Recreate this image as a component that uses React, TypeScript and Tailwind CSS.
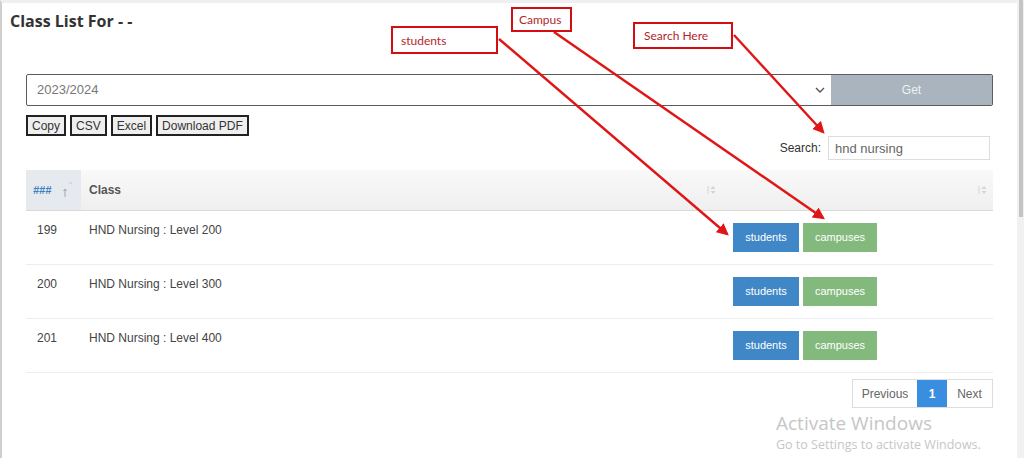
import React from "react";

const rows = [
  { id: "199", name: "HND Nursing : Level 200" },
  { id: "200", name: "HND Nursing : Level 300" },
  { id: "201", name: "HND Nursing : Level 400" },
];

const SortBoth = () => (
  <svg width="9" height="12" viewBox="0 0 9 12" className="text-[#d4d4d4]">
    <path d="M1 2v8" stroke="currentColor" strokeWidth="1" />
    <path d="M3.5 5L6 2l2.5 3z" fill="currentColor" />
    <path d="M3.5 7L6 10l2.5-3z" fill="currentColor" />
  </svg>
);

const Annotations = () => (
  <>
    <div className="absolute left-[391px] top-[26px] w-[107px] h-[28px] border-2 border-[#d40d12] bg-white pl-[8px] pt-[4px] text-[12px] text-[#b3262b] font-['Lato',sans-serif]">
      students
    </div>
    <div className="absolute left-[511px] top-[7px] w-[61px] h-[25px] border-2 border-[#d40d12] bg-white pl-[6px] pt-[2px] text-[12px] text-[#b3262b] font-['Lato',sans-serif]">
      Campus
    </div>
    <div className="absolute left-[633px] top-[22px] w-[100px] h-[27px] border-2 border-[#d40d12] bg-white pl-[9px] pt-[3px] text-[12px] text-[#b3262b] font-['Lato',sans-serif]">
      Search Here
    </div>
    <svg className="absolute left-0 top-0 pointer-events-none" width="1024" height="458">
      <defs>
        <marker id="head" markerWidth="5" markerHeight="5" refX="4" refY="2.5" orient="auto" markerUnits="strokeWidth">
          <path d="M0 0L5 2.5L0 5z" fill="#e01515" />
        </marker>
      </defs>
      <line x1="499" y1="39" x2="727" y2="234" stroke="#e01515" strokeWidth="2.4" markerEnd="url(#head)" />
      <line x1="554" y1="32" x2="823" y2="218" stroke="#e01515" strokeWidth="2.4" markerEnd="url(#head)" />
      <line x1="734" y1="35" x2="823" y2="132" stroke="#e01515" strokeWidth="2.4" markerEnd="url(#head)" />
    </svg>
  </>
);

export default function App() {
  return (
    <div className="relative flex h-[458px] w-[1024px] overflow-hidden bg-white font-['Liberation_Sans',Arial,sans-serif]">
      <div className="flex-1 border-l-2 border-t-[3px] border-l-[#cfcfcf] border-t-[#efefef]">
        <h1 className="pl-[8px] pt-[8px] text-[16px] leading-[20px] font-bold text-[#333] font-['Open_Sans',sans-serif]">
          Class List For - -
        </h1>
        <div className="px-[24px] pt-[43px]">
          <div className="flex h-[32px] rounded-[2px] border border-[#5c5c5c] overflow-hidden">
            <div className="flex flex-1 items-center justify-between pl-[10px] pr-[6px] text-[13px] text-[#777]">
              <span>2023/2024</span>
              <svg width="10" height="6" viewBox="0 0 10 6">
                <path d="M1 1l4 4 4-4" stroke="#555" strokeWidth="1.4" fill="none" />
              </svg>
            </div>
            <div className="flex w-[161px] items-center justify-center bg-[#a9b4be] text-[12px] text-[#eef1f3]">
              Get
            </div>
          </div>

          <div className="mt-[9px] flex h-[21px] gap-[4px]">
            {["Copy", "CSV", "Excel", "Download PDF"].map((b) => (
              <div key={b} className="flex items-center border-2 border-[#222] bg-[#efefef] px-[4px] text-[12px] text-[#333]">
                {b}
              </div>
            ))}
          </div>

          <div className="flex items-center justify-end gap-[7px] pr-[3px]">
            <span className="text-[12px] text-[#333]">Search:</span>
            <div className="flex h-[24px] w-[162px] items-center border border-[#ddd] px-[6px] pt-[2px] text-[13px] text-[#666]">
              hnd nursing
            </div>
          </div>

          <div className="mt-[10px]">
            <div className="flex h-[41px] border-b border-[#d9d9d9] bg-gradient-to-b from-[#f9f9f9] to-[#efefef] text-[12px]">
              <div className="flex w-[55px] items-center justify-between bg-[#e6eaef] pl-[7px] pr-[9px]">
                <span className="font-bold italic text-[11px] text-[#3f7fc4]">###</span>
                <svg width="10" height="20" viewBox="0 0 10 20">
                  <path d="M7 4l1.5-2 1.5 2" stroke="#c8ccd0" strokeWidth="1" fill="none" />
                  <path d="M3 17V9M1.5 11L3 9l1.5 2" stroke="#9aa7b5" strokeWidth="1" fill="none" />
                </svg>
              </div>
              <div className="flex w-[641px] items-center justify-between pl-[8px] pr-[6px] font-bold text-[#555]">
                <span>Class</span>
                <SortBoth />
              </div>
              <div className="flex flex-1 items-center justify-end pr-[6px]">
                <SortBoth />
              </div>
            </div>
            {rows.map((r) => (
              <div key={r.id} className="flex h-[54px] border-b border-[#eee] text-[12px] text-[#444]">
                <div className="w-[55px] pl-[11px] pt-[11px] leading-[17px]">{r.id}</div>
                <div className="w-[641px] pl-[8px] pt-[11px] leading-[17px]">{r.name}</div>
                <div className="flex flex-1 items-start gap-[4px] pl-[11px] pt-[12px]">
                  <div className="flex h-[29px] w-[66px] items-center justify-center bg-[#3f87c7] text-[11px] text-white">
                    students
                  </div>
                  <div className="flex h-[29px] w-[74px] items-center justify-center bg-[#84b97d] text-[11px] text-white">
                    campuses
                  </div>
                </div>
              </div>
            ))}
          </div>

          <div className="mt-[6px] flex justify-end">
            <div className="flex h-[29px] border border-[#ddd] text-[12px] text-[#666]">
              <div className="flex w-[64px] items-center justify-center">Previous</div>
              <div className="flex w-[30px] items-center justify-center bg-[#3a8ee0] font-bold text-white">1</div>
              <div className="flex w-[45px] items-center justify-center">Next</div>
            </div>
          </div>
        </div>
      </div>

      <div className="w-[7px] bg-[#f1f1f1]">
        <div className="ml-[2px] h-[217px] w-[4px] bg-[#c4c4c4]" />
      </div>

      <Annotations />

      <div className="absolute left-[776px] top-[411px] font-['Open_Sans',sans-serif] text-[#c6c6c6] pointer-events-none">
        <div className="text-[19px] leading-[25px]">Activate Windows</div>
        <div className="text-[12.5px] leading-[17px]">Go to Settings to activate Windows.</div>
      </div>
    </div>
  );
}
